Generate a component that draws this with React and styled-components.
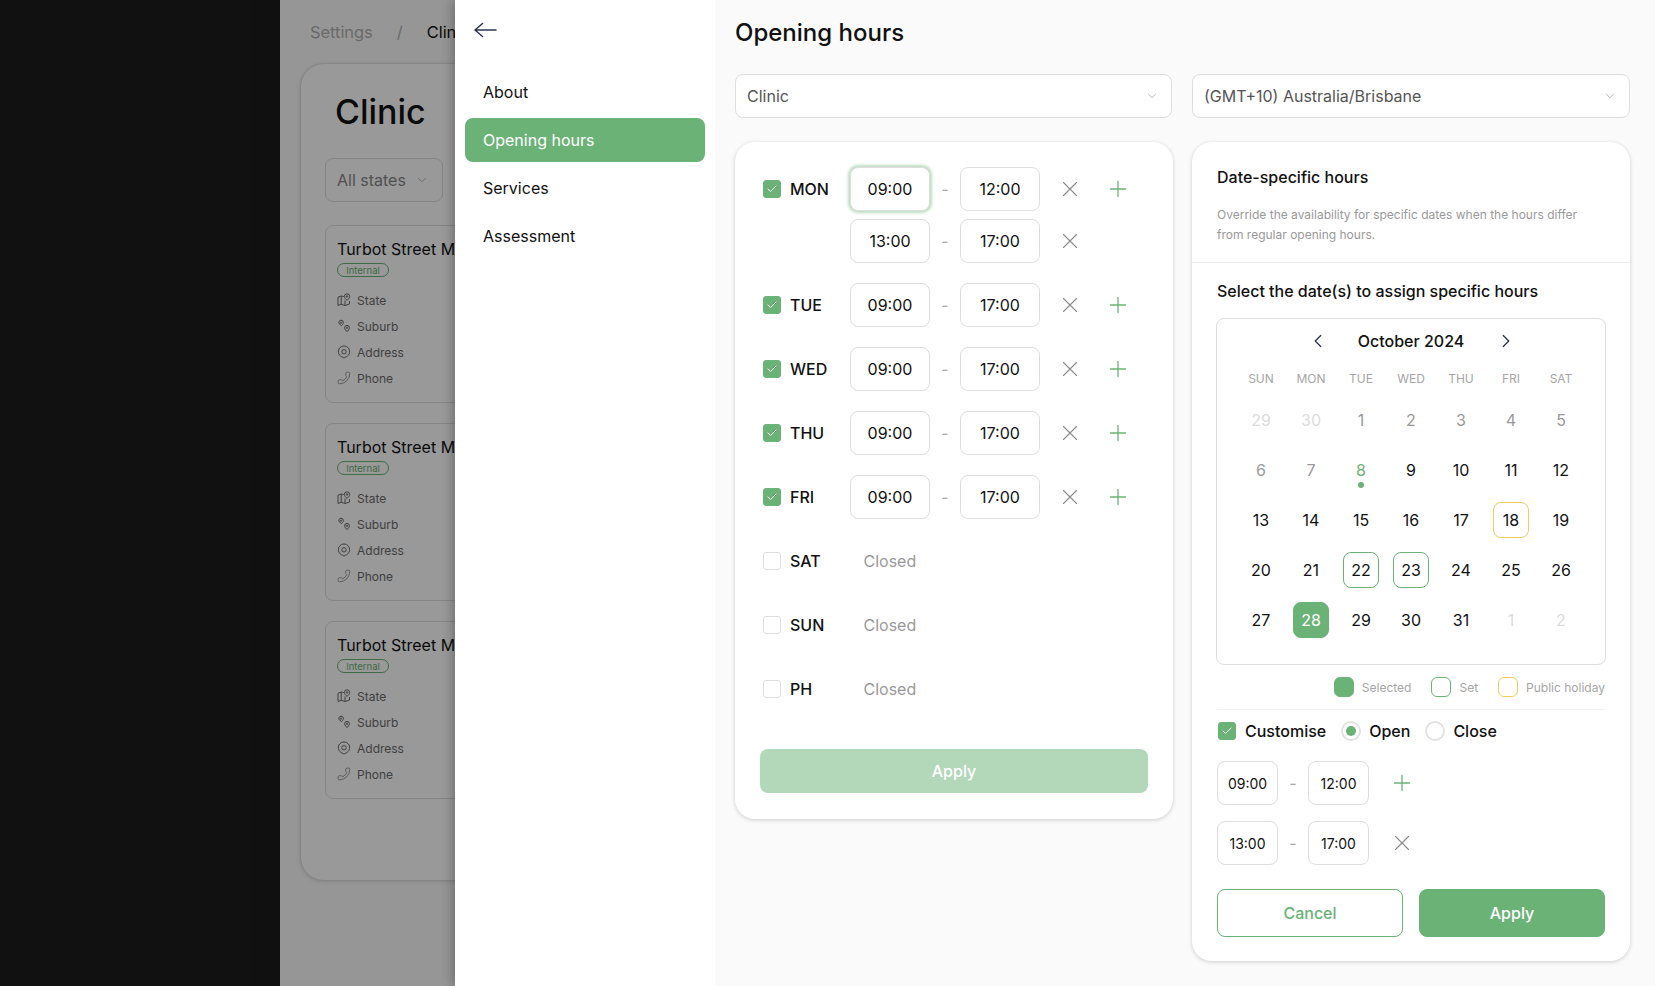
import React from "react";
import styled, { createGlobalStyle } from "styled-components";
import {
  Check,
  ChevronDown,
  ChevronLeft,
  ChevronRight,
  Phone,
  Plus,
  X,
} from "lucide-react";

const GREEN = "#6bb277";
const LINE = "#dedede";

const GlobalStyle = createGlobalStyle`
  html, body {
    margin: 0;
    padding: 0;
    background: #111;
  }
  * {
    box-sizing: border-box;
  }
  body {
    font-family: Inter, "Liberation Sans", sans-serif;
    color: #111;
  }
`;

const Screen = styled.div`
  display: flex;
  height: 986px;
  overflow: hidden;
  position: relative;
  width: 1655px;
`;

const BlackSide = styled.div`
  background: #1c1c1c;
  flex: 0 0 280px;
`;

/* page behind the drawer */
const Page = styled.div`
  background: #fafafa;
  flex: 1;
  padding: 20px;
`;

const Breadcrumbs = styled.div`
  align-items: center;
  display: flex;
  font-size: 16.4px;
  height: 24px;
  padding-left: 10px;
`;

const Crumb = styled.span`
  color: ${({ $active }) => ($active ? "#111" : "#b0b0b0")};
  margin-right: ${({ $active }) => ($active ? 0 : "24px")};
`;

const ClinicCard = styled.div`
  background: #fff;
  border: 1px solid ${LINE};
  border-radius: 24px;
  box-shadow: 0 1px 4px rgba(0, 0, 0, 0.12);
  height: 818px;
  margin-top: 19px;
  padding: 27px 24px;
`;

const ClinicTitle = styled.h1`
  font-size: 34px;
  font-weight: 500;
  line-height: 42px;
  margin: 0 0 0 10px;
`;

const StateSelect = styled.div`
  align-items: center;
  border: 1px solid ${LINE};
  border-radius: 8px;
  color: #888;
  display: flex;
  font-size: 16px;
  gap: 9px;
  height: 44px;
  margin-top: 25px;
  padding: 0 0 1px 11px;
  width: 118px;
  white-space: nowrap;
`;

const ClinicList = styled.div`
  display: flex;
  flex-direction: column;
  gap: 20px;
  margin-top: 23px;
`;

const ClinicItem = styled.div`
  border: 1px solid ${LINE};
  border-radius: 8px;
  height: 178px;
  padding: 13px 11px;
  width: 500px;
`;

/* the drawer covers the rest of the name */
const ClinicName = styled.div`
  font-size: 16px;
  line-height: 20px;
  overflow: hidden;
  white-space: nowrap;
  width: 118px;
`;

const Tag = styled.span`
  align-items: center;
  border: 1px solid ${GREEN};
  border-radius: 7px;
  color: ${GREEN};
  display: flex;
  font-size: 9.5px;
  height: 14px;
  justify-content: center;
  margin-top: 4px;
  width: 52px;
`;

const InfoList = styled.div`
  display: flex;
  flex-direction: column;
  gap: 10px;
  margin-top: 15px;
`;

const InfoRow = styled.div`
  align-items: center;
  color: #6c6c6c;
  display: flex;
  font-size: 12px;
  gap: 6px;
  height: 16px;
`;

const FlippedPhone = styled(Phone)`
  transform: scaleX(-1);
`;

const Overlay = styled.div`
  background: rgba(0, 0, 0, 0.4);
  inset: 0;
  position: absolute;
`;

/* drawer on top */
const Drawer = styled.div`
  background: #fafafa;
  bottom: 0;
  box-shadow: -3px 0 10px rgba(0, 0, 0, 0.25);
  display: flex;
  left: 455px;
  position: absolute;
  right: 0;
  top: 0;
`;

const Nav = styled.nav`
  background: #fff;
  flex: 0 0 260px;
  padding: 18px 10px;
`;

const BackButton = styled.div`
  color: #2b3350;
  height: 24px;
  margin: 0 0 28px 8px;
  width: 26px;
`;

const NavItem = styled.div`
  align-items: center;
  background: ${({ $active }) => ($active ? GREEN : "transparent")};
  border-radius: 8px;
  color: ${({ $active }) => ($active ? "#fff" : "#111")};
  display: flex;
  font-size: 16px;
  height: 44px;
  margin-bottom: 4px;
  padding-left: 18px;
`;

const Main = styled.main`
  flex: 1;
  padding: 18px 25px 0 20px;
`;

const Title = styled.h2`
  font-size: 24px;
  font-weight: 500;
  line-height: 28px;
  margin: 1px 0 27px;
`;

const Columns = styled.div`
  align-items: start;
  display: grid;
  gap: 24px 20px;
  grid-template-columns: 1fr 1fr;
`;

const Select = styled.div`
  align-items: center;
  background: #fff;
  border: 1px solid ${LINE};
  border-radius: 8px;
  color: #555;
  display: flex;
  font-size: 16px;
  height: 44px;
  justify-content: space-between;
  padding: 0 12px 0 11px;
`;

const Card = styled.section`
  background: #fff;
  border-radius: 20px;
  box-shadow: 0 1px 4px rgba(0, 0, 0, 0.18);
  padding: ${({ $flush }) => ($flush ? 0 : "25px 25px 26px")};
`;

const HoursCard = styled(Card)`
  margin-right: -1px;
`;

const DayGroups = styled.div`
  display: flex;
  flex-direction: column;
  gap: 20px;
  padding-left: 3px;
`;

const DayRows = styled.div`
  display: flex;
  flex-direction: column;
  gap: 8px;
`;

const DayRow = styled.div`
  align-items: center;
  display: flex;
  height: 44px;
`;

const DayCheck = styled.div`
  align-items: center;
  display: flex;
  flex: 0 0 87px;
  font-size: 16px;
  font-weight: 500;
  gap: 9px;
`;

const CheckBox = styled.span`
  align-items: center;
  background: ${({ $on }) => ($on ? GREEN : "#fff")};
  border: 1px solid ${({ $on }) => ($on ? GREEN : LINE)};
  border-radius: 3px;
  color: #fff;
  display: flex;
  flex: 0 0 18px;
  height: 18px;
  justify-content: center;
`;

const TimeInput = styled.div`
  align-items: center;
  background: #fff;
  border: 1px solid ${LINE};
  border-radius: 8px;
  box-shadow: ${({ $focus }) => ($focus ? "0 0 3px 2px rgba(107, 178, 119, 0.45)" : "none")};
  display: flex;
  flex: 0 0 ${({ $small }) => ($small ? "61px" : "80px")};
  font-size: ${({ $small }) => ($small ? "14px" : "16px")};
  height: 44px;
  justify-content: center;
`;

const Dash = styled.span`
  color: #aaa;
  flex: 0 0 30px;
  font-size: 16px;
  text-align: center;
`;

const GrayX = styled(X)`
  color: #8a8a8a;
  flex: 0 0 26px;
  margin-left: ${({ $gap }) => $gap}px;
`;

const GreenPlus = styled(Plus)`
  color: ${GREEN};
  flex: 0 0 26px;
  margin-left: ${({ $gap }) => $gap}px;
`;

const ClosedText = styled.span`
  color: #999;
  font-size: 16px;
  padding-left: 13.5px;
`;

const ApplyWide = styled.button`
  background: #b3d8b9;
  border: 0;
  border-radius: 8px;
  color: #fff;
  display: block;
  font: inherit;
  font-size: 16px;
  font-weight: 500;
  height: 44px;
  margin-top: 38px;
  width: 100%;
`;

const CardHead = styled.div`
  border-bottom: 1px solid #ececec;
  padding: 25px 25px 17px;
`;

const CardHeading = styled.div`
  font-size: 16px;
  font-weight: 500;
  line-height: 20px;
`;

const Description = styled.p`
  color: #999;
  font-size: 12px;
  line-height: 20px;
  margin: 18px 0 0;
`;

const CardBody = styled.div`
  padding: 18px 25px 24px 25px;
`;

const Calendar = styled.div`
  border: 1px solid ${LINE};
  border-radius: 8px;
  height: 347px;
  margin: 17px -1px 0;
  padding: 0 19px;
`;

const MonthRow = styled.div`
  align-items: center;
  color: #2b3350;
  display: grid;
  grid-template-columns: 1fr 116px 1fr;
  height: 44px;
  justify-items: center;
`;

const MonthName = styled.div`
  color: #111;
  font-size: 16px;
  font-weight: 500;
  text-align: center;
  white-space: nowrap;
  width: 150px;
  justify-self: center;
`;

const ArrowSlot = styled.span`
  display: flex;
  justify-self: ${({ $end }) => ($end ? "start" : "end")};
  margin: ${({ $end }) => ($end ? "0 0 0 26px" : "0 24px 0 0")};
`;

const Weekdays = styled.div`
  color: #a5a5a5;
  display: grid;
  font-size: 12px;
  grid-template-columns: repeat(7, 50px);
  height: 32px;
  line-height: 32px;
  text-align: center;
`;

const DayGrid = styled.div`
  display: grid;
  grid-auto-rows: 50px;
  grid-template-columns: repeat(7, 50px);
  justify-items: center;
  align-items: center;
`;

const dayColors = { out: "#dcdcdc", past: "#999", today: GREEN, normal: "#111", selected: "#fff" };
const dayBorders = { set: GREEN, holiday: "#f2cb5e", selected: GREEN };

const Day = styled.div`
  align-items: center;
  background: ${({ $kind }) => ($kind === "selected" ? GREEN : "transparent")};
  border: 1px solid ${({ $kind }) => dayBorders[$kind] || "transparent"};
  border-radius: 8px;
  color: ${({ $kind }) => dayColors[$kind] || "#111"};
  display: flex;
  font-size: 16px;
  height: 36px;
  justify-content: center;
  position: relative;
  width: 36px;
`;

const TodayDot = styled.span`
  background: ${GREEN};
  border-radius: 50%;
  bottom: -1px;
  height: 6px;
  left: 14px;
  position: absolute;
  width: 6px;
`;

const Legend = styled.div`
  align-items: center;
  border-bottom: 1px solid #f1f1f1;
  color: #a5a5a5;
  display: flex;
  font-size: 12px;
  justify-content: flex-end;
  margin-top: 12px;
  padding-bottom: 12px;
`;

const Swatch = styled.span`
  background: ${({ $fill }) => $fill || "#fff"};
  border: 1px solid ${({ $color }) => $color};
  border-radius: 6px;
  height: 20px;
  margin: 0 8px 0 20px;
  width: 20px;
`;

const CustomRow = styled.div`
  align-items: center;
  display: flex;
  font-size: 16px;
  font-weight: 500;
  height: 20px;
  margin-top: 11px;
  padding-left: 1px;
`;

const CustomCheck = styled.span`
  align-items: center;
  display: flex;
  gap: 9px;
  margin-right: 15px;
`;

const RadioLabel = styled.span`
  align-items: center;
  display: flex;
  gap: 8px;
  margin-right: 15px;
`;

const Radio = styled.span`
  align-items: center;
  border: 2px solid #e2e2e2;
  border-radius: 50%;
  display: flex;
  height: 20px;
  justify-content: center;
  width: 20px;

  &::after {
    background: ${({ $on }) => ($on ? GREEN : "transparent")};
    border-radius: 50%;
    content: "";
    height: 10px;
    width: 10px;
  }
`;

const SlotRows = styled.div`
  display: flex;
  flex-direction: column;
  gap: 16px;
  margin-top: 20px;
`;

const SlotRow = styled.div`
  align-items: center;
  display: flex;
`;

const Actions = styled.div`
  display: grid;
  gap: 16px;
  grid-template-columns: 1fr 1fr;
  margin-top: 24px;
`;

const ActionButton = styled.button`
  background: ${({ $primary }) => ($primary ? GREEN : "#fff")};
  border: 1px solid ${GREEN};
  border-radius: 8px;
  color: ${({ $primary }) => ($primary ? "#fff" : GREEN)};
  font: inherit;
  font-size: 16px;
  font-weight: 500;
  height: 48px;
`;

const BackArrow = () => (
  <svg width="24" height="24" viewBox="0 0 24 24" fill="none" stroke="currentColor" strokeWidth="1.5" strokeLinecap="round" strokeLinejoin="round">
    <path d="M23 12H2M9.500 5.500L2 12l7.500 6.500" />
  </svg>
);

const StateIcon = () => (
  <svg width="14" height="14" viewBox="0 0 14 14" fill="none" stroke="currentColor" strokeWidth="1">
    <path d="M6.800 3.600L4.200 3 1 4.200V12.500L4.200 11.300 8 12.500 12.500 11V8" />
    <path d="M4.200 3V11.300M8 7.500V12.500" />
    <path d="M10 .8a2.700 2.700 0 0 1 2.700 2.700c0 1.500-1.600 3-2.700 3.900-1.100-.9-2.700-2.400-2.700-3.900A2.700 2.700 0 0 1 10 .8z" />
    <circle cx="10" cy="3.500" r="0.8" />
  </svg>
);

const SuburbIcon = () => (
  <svg width="14" height="14" viewBox="0 0 14 14" fill="none" stroke="currentColor" strokeWidth="1">
    <path d="M4 1.200a2.400 2.400 0 0 1 2.400 2.400c0 1.200-1.200 2.200-1.900 3L1.900 4.400A2.400 2.400 0 0 1 4 1.200z" />
    <circle cx="4" cy="3.600" r="0.7" />
    <path d="M10 6.400a2.400 2.400 0 0 1 2.400 2.400c0 1.300-1.400 3-2.400 3.800-1-.8-2.400-2.500-2.400-3.800A2.400 2.400 0 0 1 10 6.400z" />
    <circle cx="10" cy="8.800" r="0.7" />
  </svg>
);

const AddressIcon = () => (
  <svg width="14" height="14" viewBox="0 0 14 14" fill="none" stroke="currentColor" strokeWidth="1">
    <path d="M7 13.200c-.8-.9-1.600-1.100-2.800-1.600a5.700 5.700 0 1 1 5.600 0C8.600 12.100 7.800 12.300 7 13.200z" />
    <circle cx="7" cy="6.800" r="2.200" />
  </svg>
);

const DAYS = [
  { name: "MON", on: true, slots: [["09:00", "12:00"], ["13:00", "17:00"]] },
  { name: "TUE", on: true, slots: [["09:00", "17:00"]] },
  { name: "WED", on: true, slots: [["09:00", "17:00"]] },
  { name: "THU", on: true, slots: [["09:00", "17:00"]] },
  { name: "FRI", on: true, slots: [["09:00", "17:00"]] },
  { name: "SAT", on: false, slots: [] },
  { name: "SUN", on: false, slots: [] },
  { name: "PH", on: false, slots: [] },
];

const WEEKDAYS = ["SUN", "MON", "TUE", "WED", "THU", "FRI", "SAT"];

const dayKind = (label, index) => {
  if (index < 2 || index > 32) return "out";
  if (label === 8) return "today";
  if (index < 9) return "past";
  if (label === 18) return "holiday";
  if (label === 22 || label === 23) return "set";
  if (label === 28) return "selected";
  return "normal";
};

const CALENDAR = [29, 30, ...Array.from({ length: 31 }, (_, i) => i + 1), 1, 2];

const ClinicEntry = () => (
  <ClinicItem>
    <ClinicName>Turbot Street Medical</ClinicName>
    <Tag>Internal</Tag>
    <InfoList>
      <InfoRow>
        <StateIcon />
        State
      </InfoRow>
      <InfoRow>
        <SuburbIcon />
        Suburb
      </InfoRow>
      <InfoRow>
        <AddressIcon />
        Address
      </InfoRow>
      <InfoRow>
        <FlippedPhone size={14} strokeWidth={1.1} />
        Phone
      </InfoRow>
    </InfoList>
  </ClinicItem>
);

const App = () => (
  <Screen>
    <GlobalStyle />
    <BlackSide />
    <Page>
      <Breadcrumbs>
        <Crumb>Settings</Crumb>
        <Crumb>/</Crumb>
        <Crumb $active>Clinic</Crumb>
      </Breadcrumbs>
      <ClinicCard>
        <ClinicTitle>Clinic</ClinicTitle>
        <StateSelect>
          All states
          <ChevronDown size={14} strokeWidth={1} />
        </StateSelect>
        <ClinicList>
          <ClinicEntry />
          <ClinicEntry />
          <ClinicEntry />
        </ClinicList>
      </ClinicCard>
    </Page>
    <Overlay />
    <Drawer>
      <Nav>
        <BackButton>
          <BackArrow />
        </BackButton>
        <NavItem>About</NavItem>
        <NavItem $active>Opening hours</NavItem>
        <NavItem>Services</NavItem>
        <NavItem>Assessment</NavItem>
      </Nav>
      <Main>
        <Title>Opening hours</Title>
        <Columns>
          <Select>
            Clinic
            <ChevronDown size={14} strokeWidth={1} color="#888" />
          </Select>
          <Select>
            (GMT+10) Australia/Brisbane
            <ChevronDown size={14} strokeWidth={1} color="#888" />
          </Select>
          <HoursCard>
            <DayGroups>
              {DAYS.map((day) => (
                <DayRows key={day.name}>
                  {day.on ? (
                    day.slots.map(([from, to], i) => (
                      <DayRow key={from}>
                        <DayCheck>
                          {i === 0 && (
                            <>
                              <CheckBox $on>
                                <Check size={12} strokeWidth={2} />
                              </CheckBox>
                              {day.name}
                            </>
                          )}
                        </DayCheck>
                        <TimeInput $focus={day.name === "MON" && i === 0}>{from}</TimeInput>
                        <Dash>-</Dash>
                        <TimeInput>{to}</TimeInput>
                        <GrayX size={26} strokeWidth={1} $gap={17} />
                        {i === 0 && <GreenPlus size={26} strokeWidth={1.2} $gap={22} />}
                      </DayRow>
                    ))
                  ) : (
                    <DayRow>
                      <DayCheck>
                        <CheckBox />
                        {day.name}
                      </DayCheck>
                      <ClosedText>Closed</ClosedText>
                    </DayRow>
                  )}
                </DayRows>
              ))}
            </DayGroups>
            <ApplyWide>Apply</ApplyWide>
          </HoursCard>
          <Card $flush>
            <CardHead>
              <CardHeading>Date-specific hours</CardHeading>
              <Description>
                Override the availability for specific dates when the hours differ
                <br />
                from regular opening hours.
              </Description>
            </CardHead>
            <CardBody>
              <CardHeading>Select the date(s) to assign specific hours</CardHeading>
              <Calendar>
                <MonthRow>
                  <ArrowSlot>
                    <ChevronLeft size={22} strokeWidth={1.4} />
                  </ArrowSlot>
                  <MonthName>October 2024</MonthName>
                  <ArrowSlot $end>
                    <ChevronRight size={22} strokeWidth={1.4} />
                  </ArrowSlot>
                </MonthRow>
                <Weekdays>
                  {WEEKDAYS.map((name) => (
                    <span key={name}>{name}</span>
                  ))}
                </Weekdays>
                <DayGrid>
                  {CALENDAR.map((label, index) => {
                    const kind = dayKind(label, index);
                    return (
                      <Day key={index} $kind={kind}>
                        {label}
                        {kind === "today" && <TodayDot />}
                      </Day>
                    );
                  })}
                </DayGrid>
              </Calendar>
              <Legend>
                <Swatch $color={GREEN} $fill={GREEN} />
                Selected
                <Swatch $color={GREEN} />
                Set
                <Swatch $color="#f2cb5e" />
                Public holiday
              </Legend>
              <CustomRow>
                <CustomCheck>
                  <CheckBox $on>
                    <Check size={12} strokeWidth={2} />
                  </CheckBox>
                  Customise
                </CustomCheck>
                <RadioLabel>
                  <Radio $on />
                  Open
                </RadioLabel>
                <RadioLabel>
                  <Radio />
                  Close
                </RadioLabel>
              </CustomRow>
              <SlotRows>
                <SlotRow>
                  <TimeInput $small>09:00</TimeInput>
                  <Dash>-</Dash>
                  <TimeInput $small>12:00</TimeInput>
                  <GreenPlus size={26} strokeWidth={1.2} $gap={20} />
                </SlotRow>
                <SlotRow>
                  <TimeInput $small>13:00</TimeInput>
                  <Dash>-</Dash>
                  <TimeInput $small>17:00</TimeInput>
                  <GrayX size={26} strokeWidth={1} $gap={20} />
                </SlotRow>
              </SlotRows>
              <Actions>
                <ActionButton>Cancel</ActionButton>
                <ActionButton $primary>Apply</ActionButton>
              </Actions>
            </CardBody>
          </Card>
        </Columns>
      </Main>
    </Drawer>
  </Screen>
);

export default App;
